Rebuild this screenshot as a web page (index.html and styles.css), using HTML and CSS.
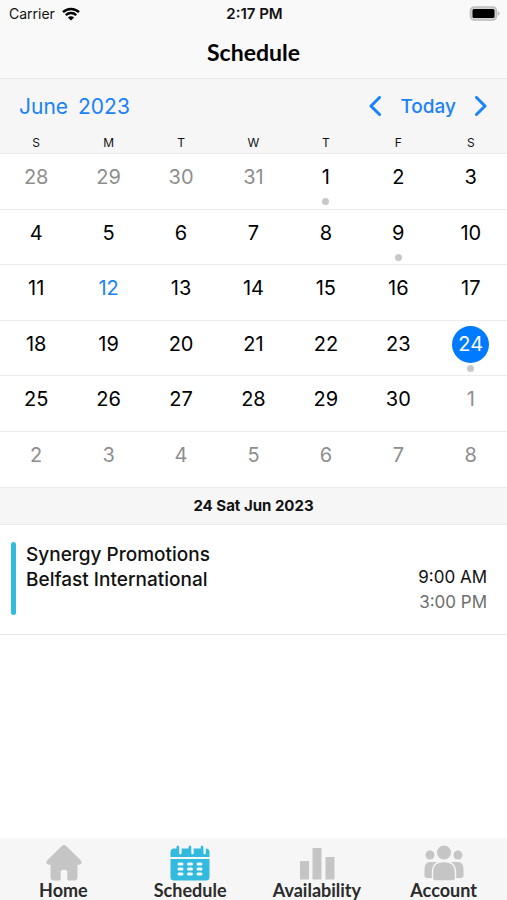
FILE: index.html
```html
<!DOCTYPE html>
<html lang="en">
<head>
    <meta charset="UTF-8">
    <meta name="viewport" content="width=device-width, initial-scale=1.0">
    <title>Schedule</title>
    <link rel="stylesheet" href="styles.css">
</head>
<body>
    <div class="status-bar">
        <div class="carrier">
            <span>Carrier</span>
            <svg class="wifi" viewBox="0 0 18 14" aria-hidden="true">
                <path d="M1 5.2a11.5 11.5 0 0 1 16 0M3.8 8.2a7.4 7.4 0 0 1 10.4 0" fill="none" stroke="#000" stroke-width="2.4"/>
                <path d="M9 13.6L5.9 10.5a4.4 4.4 0 0 1 6.2 0z"/>
            </svg>
        </div>
        <span class="clock">2:17 PM</span>
        <div class="battery">
            <svg viewBox="0 0 31 15" aria-hidden="true">
                <rect x="1.5" y="1" width="26" height="13" rx="4" fill="#d4d4d4" stroke="#bdbdbd" stroke-width="1.6"/>
                <rect x="3.5" y="3" width="22" height="9" rx="1.5"/>
                <path d="M28.8 5.2v4.6q1.9-.8 1.9-2.3t-1.9-2.3z" fill="#bdbdbd"/>
            </svg>
        </div>
    </div>

    <header class="title-bar">
        <h1>Schedule</h1>
    </header>

    <main>
        <div class="month-bar">
            <h2><span>June</span> <span>2023</span></h2>
            <div class="month-nav">
                <button aria-label="Previous month">
                    <svg viewBox="0 0 12 20" aria-hidden="true"><path d="M10.5 1.5L2 10l8.5 8.5"/></svg>
                </button>
                <button>Today</button>
                <button aria-label="Next month">
                    <svg viewBox="0 0 12 20" aria-hidden="true"><path d="M1.5 1.5L10 10l-8.5 8.5"/></svg>
                </button>
            </div>
        </div>

        <table class="calendar">
            <thead>
                <tr><th>S</th><th>M</th><th>T</th><th>W</th><th>T</th><th>F</th><th>S</th></tr>
            </thead>
            <tbody>
                <tr>
                    <td><button class="day other">28</button></td>
                    <td><button class="day other">29</button></td>
                    <td><button class="day other">30</button></td>
                    <td><button class="day other">31</button></td>
                    <td><button class="day event">1</button></td>
                    <td><button class="day">2</button></td>
                    <td><button class="day">3</button></td>
                </tr>
                <tr>
                    <td><button class="day">4</button></td>
                    <td><button class="day">5</button></td>
                    <td><button class="day">6</button></td>
                    <td><button class="day">7</button></td>
                    <td><button class="day">8</button></td>
                    <td><button class="day event">9</button></td>
                    <td><button class="day">10</button></td>
                </tr>
                <tr>
                    <td><button class="day">11</button></td>
                    <td><button class="day today">12</button></td>
                    <td><button class="day">13</button></td>
                    <td><button class="day">14</button></td>
                    <td><button class="day">15</button></td>
                    <td><button class="day">16</button></td>
                    <td><button class="day">17</button></td>
                </tr>
                <tr>
                    <td><button class="day">18</button></td>
                    <td><button class="day">19</button></td>
                    <td><button class="day">20</button></td>
                    <td><button class="day">21</button></td>
                    <td><button class="day">22</button></td>
                    <td><button class="day">23</button></td>
                    <td><button class="day event selected">24</button></td>
                </tr>
                <tr>
                    <td><button class="day">25</button></td>
                    <td><button class="day">26</button></td>
                    <td><button class="day">27</button></td>
                    <td><button class="day">28</button></td>
                    <td><button class="day">29</button></td>
                    <td><button class="day">30</button></td>
                    <td><button class="day other">1</button></td>
                </tr>
                <tr>
                    <td><button class="day other">2</button></td>
                    <td><button class="day other">3</button></td>
                    <td><button class="day other">4</button></td>
                    <td><button class="day other">5</button></td>
                    <td><button class="day other">6</button></td>
                    <td><button class="day other">7</button></td>
                    <td><button class="day other">8</button></td>
                </tr>
            </tbody>
        </table>

        <h3 class="day-heading">24 Sat Jun 2023</h3>

        <div class="shift">
            <div class="shift-details">
                <p>Synergy Promotions</p>
                <p>Belfast International</p>
            </div>
            <div class="shift-times">
                <p>9:00 AM</p>
                <p class="end">3:00 PM</p>
            </div>
        </div>
    </main>

    <nav class="tab-bar">
        <a href="#home">
            <svg viewBox="0 0 40 36" aria-hidden="true">
                <path d="M18.8 1q2.2-1.800 4.400 0L37.500 15q2 2.200.5 3.800-1 1.200-3.500 1V32q0 3.500-3.500 3.500h-5.500q-1.200 0-1.200-1.200v-7.500q0-1.800-1.800-1.800h-3q-1.800 0-1.800 1.800v7.500q0 1.200-1.200 1.200H11Q7.500 35.500 7.500 32V19.800q-2.500.2-3.500-1-1.500-1.600.5-3.800z"/>
            </svg>
            <span>Home</span>
        </a>
        <a href="#schedule" class="active">
            <svg viewBox="0 0 40 36" aria-hidden="true">
                <path d="M.5 12V7Q.5 3.500 4 3.500h2.500V2q0-1.500 1.300-1.500T9.200 2v6q0 1.400 1.200 1.400T11.600 8V3.500h7V2q0-1.500 1.300-1.500T21.300 2v6q0 1.400 1.200 1.400T23.700 8V3.500h7V2q0-1.500 1.300-1.500T33.400 2v6q0 1.400 1.200 1.400T35.800 8V3.500q3.700.3 3.700 3.500v5z"/>
                <path d="M.5 14h39v18q0 3.500-3.500 3.500H4Q.5 35.500.5 32z"/>
                <g fill="#f6f6f6">
                    <rect x="7.500" y="17.500" width="6" height="3" rx="1.500"/>
                    <rect x="17" y="17.500" width="6" height="3" rx="1.500"/>
                    <rect x="26.500" y="17.500" width="6" height="3" rx="1.500"/>
                    <rect x="7.500" y="22.500" width="6" height="3" rx="1.500"/>
                    <rect x="17" y="22.500" width="6" height="3" rx="1.500"/>
                    <rect x="26.500" y="22.500" width="6" height="3" rx="1.500"/>
                    <rect x="7.500" y="27.500" width="6" height="3" rx="1.500"/>
                    <rect x="17" y="27.500" width="6" height="3" rx="1.500"/>
                    <rect x="26.500" y="27.500" width="6" height="3" rx="1.500"/>
                </g>
            </svg>
            <span>Schedule</span>
        </a>
        <a href="#availability">
            <svg viewBox="0 0 40 36" aria-hidden="true">
                <path d="M3 16h9v18.500H3zM15.500 3h9v31.500h-9zM28.500 12h9v22.500h-9z"/>
            </svg>
            <span>Availability</span>
        </a>
        <a href="#account">
            <svg viewBox="0 0 40 36" aria-hidden="true">
                <circle cx="20" cy="7.500" r="7"/>
                <circle cx="6" cy="10" r="4.500"/>
                <circle cx="34" cy="10" r="4.500"/>
                <path d="M9 33V26q0-5 4-9H6q-5.500.5-5.500 6.500v7q0 2.500 2.500 2.500zM31 33V26q0-5-4-9h7q5.500.5 5.500 6.500v7q0 2.500-2.500 2.500z"/>
                <path d="M8.500 33V27.500Q8.500 16.500 20 16.500t11.500 11V33q0 3-3.200 3H11.700q-3.200 0-3.200-3z" stroke="#f6f6f6" stroke-width="1.400"/>
            </svg>
            <span>Account</span>
        </a>
    </nav>
</body>
</html>
```

FILE: styles.css
```css
* {
    box-sizing: border-box;
}

body {
    margin: 0;
    display: flex;
    flex-direction: column;
    min-height: 100vh;
    font-family: Inter, "Liberation Sans", sans-serif;
    color: #111;
    background: white;
}

h1, h2, h3, p {
    margin: 0;
}

button {
    padding: 0;
    border: none;
    background: none;
    font: inherit;
    color: inherit;
    cursor: pointer;
}

main {
    flex: 1;
}

.status-bar {
    display: grid;
    grid-template-columns: 1fr auto 1fr;
    align-items: center;
    height: 27px;
    padding: 0 7px 0 9px;
    background: #f9f9f9;
    font-size: 14px;
}

.carrier {
    display: flex;
    align-items: center;
    gap: 7px;
}

.wifi {
    width: 18px;
    height: 14px;
}

.clock {
    font-size: 15px;
    font-weight: 600;
}

.battery {
    display: flex;
    justify-content: flex-end;
}

.battery svg {
    width: 31px;
    height: 15px;
}

.title-bar {
    height: 52px;
    border-bottom: 1px solid #e9e9e9;
    background: #f9f9f9;
    text-align: center;
}

.title-bar h1 {
    font-family: Lato, "Open Sans", sans-serif;
    font-size: 23px;
    line-height: 51px;
    font-weight: 700;
    color: black;
}

/* Month and navigation */
.month-bar {
    display: flex;
    justify-content: space-between;
    align-items: center;
    height: 54px;
    padding: 0 20px 0 19px;
    background: #f6f6f6;
    color: #1a82f7;
}

.month-bar h2 {
    display: flex;
    gap: 10px;
    font-size: 21px;
    font-weight: 400;
}

.month-nav {
    display: flex;
    align-items: center;
    gap: 19px;
    font-size: 19px;
    font-weight: 500;
}

.month-nav svg {
    display: block;
    width: 12px;
    height: 20px;
    fill: none;
    stroke: #1a82f7;
    stroke-width: 3;
    stroke-linecap: round;
    stroke-linejoin: round;
}

/* Calendar */
.calendar {
    width: 100%;
    table-layout: fixed;
    border-collapse: collapse;
}

.calendar th {
    height: 20px;
    padding: 0;
    background: #f6f6f6;
    font-size: 12px;
    line-height: 20px;
    font-weight: 400;
}

.calendar td {
    height: 55px;
    padding: 0;
    border-top: 1px solid #ebebeb;
    text-align: center;
    vertical-align: top;
}

.calendar tr:nth-child(odd) td {
    height: 56px;
}

.day {
    position: relative;
    width: 37px;
    height: 37px;
    margin-top: 5px;
    border-radius: 50%;
    font-size: 20px;
    line-height: 37px;
    color: black;
}

.day.other {
    color: #8e8e8e;
}

.day.today {
    color: #1a82f7;
}

.day.selected {
    background: #007aff;
    color: white;
}

.day.event::after {
    content: "";
    position: absolute;
    left: 15px;
    top: 39px;
    width: 7px;
    height: 7px;
    border-radius: 50%;
    background: #c8c8c8;
}

.day-heading {
    border-top: 1px solid #ebebeb;
    border-bottom: 1px solid #ebebeb;
    background: #f6f6f6;
    font-size: 15px;
    line-height: 36px;
    font-weight: 700;
    text-align: center;
}

.shift {
    display: flex;
    justify-content: space-between;
    min-height: 110px;
    padding: 17px 20px 19px 11px;
    border-bottom: 1px solid #e9e9e9;
    line-height: 25px;
}

.shift-details {
    display: flex;
    flex-direction: column;
    position: relative;
    padding-left: 15px;
    font-size: 19px;
    font-weight: 500;
}

.shift-details::before {
    content: "";
    position: absolute;
    left: 0;
    top: 0;
    bottom: 0;
    width: 5px;
    border-radius: 3px;
    background: #32bbdf;
}

.shift-times {
    align-self: flex-end;
    font-size: 17px;
    text-align: right;
}

.shift-times .end {
    color: #6e6e6e;
}

/* Bottom tabs */
.tab-bar {
    display: flex;
    height: 62px;
    padding-top: 7px;
    background: #f6f6f6;
}

.tab-bar a {
    flex: 1;
    display: flex;
    flex-direction: column;
    align-items: center;
    font-family: Lato, "Open Sans", sans-serif;
    font-size: 18px;
    line-height: 19px;
    font-weight: 700;
    color: #2b2b2b;
    text-decoration: none;
}

.tab-bar svg {
    width: 40px;
    height: 36px;
    fill: #c6c5c6;
}

.tab-bar .active svg {
    fill: #32bbdf;
}
```
